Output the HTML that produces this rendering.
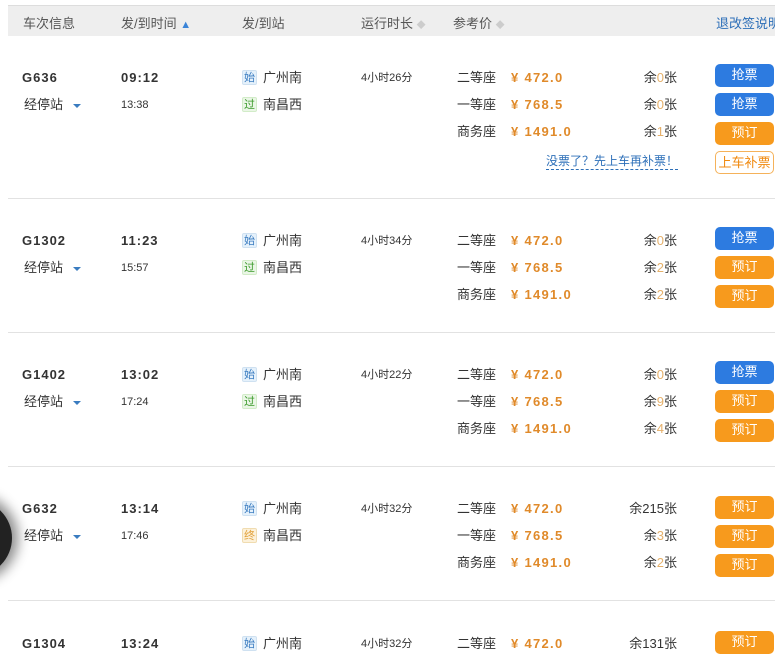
<!DOCTYPE html>
<html><head><meta charset="utf-8"><style>
*{margin:0;padding:0;box-sizing:border-box}
body{width:775px;height:653px;overflow:hidden;background:#fff;position:relative;font-family:"Liberation Sans","Noto Sans CJK SC",sans-serif;font-size:12px;color:#333}
.a{position:absolute;white-space:nowrap;line-height:16px}
.hd{position:absolute;left:8px;top:5px;width:767px;height:31px;background:#eeeeee;border-top:1px solid #ddd;overflow:hidden}
.hd span{position:absolute;top:7px;color:#555;font-size:13px;white-space:nowrap}
.b{font-weight:bold;font-size:13px;color:#333;letter-spacing:1px}
.pr{color:#e08a2a;font-weight:bold;font-size:13px;letter-spacing:1.3px}
.bd{position:absolute;width:15px;height:15px;border-radius:2px;font-size:11px;line-height:15px;text-align:center}
.s{background:#e5f1fb;color:#3a7cc0;border:1px solid #cfe1f1}
.g{background:#eaf6e6;color:#3a9a2a;border:1px solid #d2ecc8}
.z{background:#fcf1da;color:#e2a23c;border:1px solid #f0dcb0}
.btn{position:absolute;left:715px;width:59px;height:23px;border-radius:5px;color:#fff;text-align:center;line-height:22px;font-size:13px}
.bl{background:#2d7be0}.or{background:#f79a1d}
.sep{position:absolute;left:8px;width:767px;height:1px;background:#e2e2e2}
.rm{position:absolute;width:60px;text-align:right;left:617px}
.n{color:#e5b06a}
.tri{display:inline-block;width:0;height:0;border-left:4px solid transparent;border-right:4px solid transparent;border-top:4px solid #3a7cc0;margin-left:10px;vertical-align:middle}
</style></head><body>
<div class="hd">
<span style="left:15px">车次信息</span>
<span style="left:113px">发/到时间 <b style="color:#3a84d8;font-size:11px">▲</b></span>
<span style="left:234px">发/到站</span>
<span style="left:353px">运行时长 <b style="color:#ccc;font-size:9px">◆</b></span>
<span style="left:445px">参考价 <b style="color:#ccc;font-size:9px">◆</b></span>
<span style="left:708px;color:#2d6fb8">退改签说明</span>
</div>
<div style="position:absolute;left:-64px;top:500px;width:76px;height:76px;border-radius:50%;background:#222;box-shadow:0 0 12px 6px rgba(0,0,0,.45)"></div>

<div class="a b" style="left:22px;top:70px">G636</div>
<div class="a b" style="left:121px;top:70px">09:12</div>
<div class="a" style="left:24px;top:97px;font-size:13px">经停站<span class="tri"></span></div>
<div class="a" style="left:121px;top:97px;font-size:11px">13:38</div>
<div class="bd s" style="left:242px;top:70px">始</div><div class="a" style="left:263px;top:70px;font-size:13px">广州南</div>
<div class="bd g" style="left:242px;top:97px">过</div><div class="a" style="left:263px;top:97px;font-size:13px">南昌西</div>
<div class="a" style="left:361px;top:70px;font-size:11px">4小时26分</div>
<div class="a" style="left:457px;top:70px;font-size:13px">二等座</div><div class="a pr" style="left:511px;top:70px">¥ 472.0</div><div class="a rm" style="top:70px;font-size:13px">余<span class="n">0</span>张</div>
<div class="a" style="left:457px;top:97px;font-size:13px">一等座</div><div class="a pr" style="left:511px;top:97px">¥ 768.5</div><div class="a rm" style="top:97px;font-size:13px">余<span class="n">0</span>张</div>
<div class="a" style="left:457px;top:124px;font-size:13px">商务座</div><div class="a pr" style="left:511px;top:124px">¥ 1491.0</div><div class="a rm" style="top:124px;font-size:13px">余<span class="n">1</span>张</div>
<div class="btn bl" style="top:64px">抢票</div><div class="btn bl" style="top:93px">抢票</div><div class="btn or" style="top:122px">预订</div>
<div class="a" style="left:546px;top:153px;color:#2d6fb8;border-bottom:1px dashed #2d6fb8">没票了？先上车再补票！</div>
<div class="btn" style="top:151px;background:#fff;border:1px solid #f5b25a;color:#f08a10">上车补票</div>
<div class="sep" style="top:198px"></div>

<div class="a b" style="left:22px;top:233px">G1302</div>
<div class="a b" style="left:121px;top:233px">11:23</div>
<div class="a" style="left:24px;top:260px;font-size:13px">经停站<span class="tri"></span></div>
<div class="a" style="left:121px;top:260px;font-size:11px">15:57</div>
<div class="bd s" style="left:242px;top:233px">始</div><div class="a" style="left:263px;top:233px;font-size:13px">广州南</div>
<div class="bd g" style="left:242px;top:260px">过</div><div class="a" style="left:263px;top:260px;font-size:13px">南昌西</div>
<div class="a" style="left:361px;top:233px;font-size:11px">4小时34分</div>
<div class="a" style="left:457px;top:233px;font-size:13px">二等座</div><div class="a pr" style="left:511px;top:233px">¥ 472.0</div><div class="a rm" style="top:233px;font-size:13px">余<span class="n">0</span>张</div>
<div class="a" style="left:457px;top:260px;font-size:13px">一等座</div><div class="a pr" style="left:511px;top:260px">¥ 768.5</div><div class="a rm" style="top:260px;font-size:13px">余<span class="n">2</span>张</div>
<div class="a" style="left:457px;top:287px;font-size:13px">商务座</div><div class="a pr" style="left:511px;top:287px">¥ 1491.0</div><div class="a rm" style="top:287px;font-size:13px">余<span class="n">2</span>张</div>
<div class="btn bl" style="top:227px">抢票</div><div class="btn or" style="top:256px">预订</div><div class="btn or" style="top:285px">预订</div>
<div class="sep" style="top:332px"></div>

<div class="a b" style="left:22px;top:367px">G1402</div>
<div class="a b" style="left:121px;top:367px">13:02</div>
<div class="a" style="left:24px;top:394px;font-size:13px">经停站<span class="tri"></span></div>
<div class="a" style="left:121px;top:394px;font-size:11px">17:24</div>
<div class="bd s" style="left:242px;top:367px">始</div><div class="a" style="left:263px;top:367px;font-size:13px">广州南</div>
<div class="bd g" style="left:242px;top:394px">过</div><div class="a" style="left:263px;top:394px;font-size:13px">南昌西</div>
<div class="a" style="left:361px;top:367px;font-size:11px">4小时22分</div>
<div class="a" style="left:457px;top:367px;font-size:13px">二等座</div><div class="a pr" style="left:511px;top:367px">¥ 472.0</div><div class="a rm" style="top:367px;font-size:13px">余<span class="n">0</span>张</div>
<div class="a" style="left:457px;top:394px;font-size:13px">一等座</div><div class="a pr" style="left:511px;top:394px">¥ 768.5</div><div class="a rm" style="top:394px;font-size:13px">余<span class="n">9</span>张</div>
<div class="a" style="left:457px;top:421px;font-size:13px">商务座</div><div class="a pr" style="left:511px;top:421px">¥ 1491.0</div><div class="a rm" style="top:421px;font-size:13px">余<span class="n">4</span>张</div>
<div class="btn bl" style="top:361px">抢票</div><div class="btn or" style="top:390px">预订</div><div class="btn or" style="top:419px">预订</div>
<div class="sep" style="top:466px"></div>

<div class="a b" style="left:22px;top:501px">G632</div>
<div class="a b" style="left:121px;top:501px">13:14</div>
<div class="a" style="left:24px;top:528px;font-size:13px">经停站<span class="tri"></span></div>
<div class="a" style="left:121px;top:528px;font-size:11px">17:46</div>
<div class="bd s" style="left:242px;top:501px">始</div><div class="a" style="left:263px;top:501px;font-size:13px">广州南</div>
<div class="bd z" style="left:242px;top:528px">终</div><div class="a" style="left:263px;top:528px;font-size:13px">南昌西</div>
<div class="a" style="left:361px;top:501px;font-size:11px">4小时32分</div>
<div class="a" style="left:457px;top:501px;font-size:13px">二等座</div><div class="a pr" style="left:511px;top:501px">¥ 472.0</div><div class="a rm" style="top:501px;font-size:13px">余215张</div>
<div class="a" style="left:457px;top:528px;font-size:13px">一等座</div><div class="a pr" style="left:511px;top:528px">¥ 768.5</div><div class="a rm" style="top:528px;font-size:13px">余<span class="n">3</span>张</div>
<div class="a" style="left:457px;top:555px;font-size:13px">商务座</div><div class="a pr" style="left:511px;top:555px">¥ 1491.0</div><div class="a rm" style="top:555px;font-size:13px">余<span class="n">2</span>张</div>
<div class="btn or" style="top:496px">预订</div><div class="btn or" style="top:525px">预订</div><div class="btn or" style="top:554px">预订</div>
<div class="sep" style="top:600px"></div>

<div class="a b" style="left:22px;top:636px">G1304</div>
<div class="a b" style="left:121px;top:636px">13:24</div>
<div class="bd s" style="left:242px;top:636px">始</div><div class="a" style="left:263px;top:636px;font-size:13px">广州南</div>
<div class="a" style="left:361px;top:636px;font-size:11px">4小时32分</div>
<div class="a" style="left:457px;top:636px;font-size:13px">二等座</div><div class="a pr" style="left:511px;top:636px">¥ 472.0</div><div class="a rm" style="top:636px;font-size:13px">余131张</div>
<div class="btn or" style="top:631px">预订</div>
</body></html>
